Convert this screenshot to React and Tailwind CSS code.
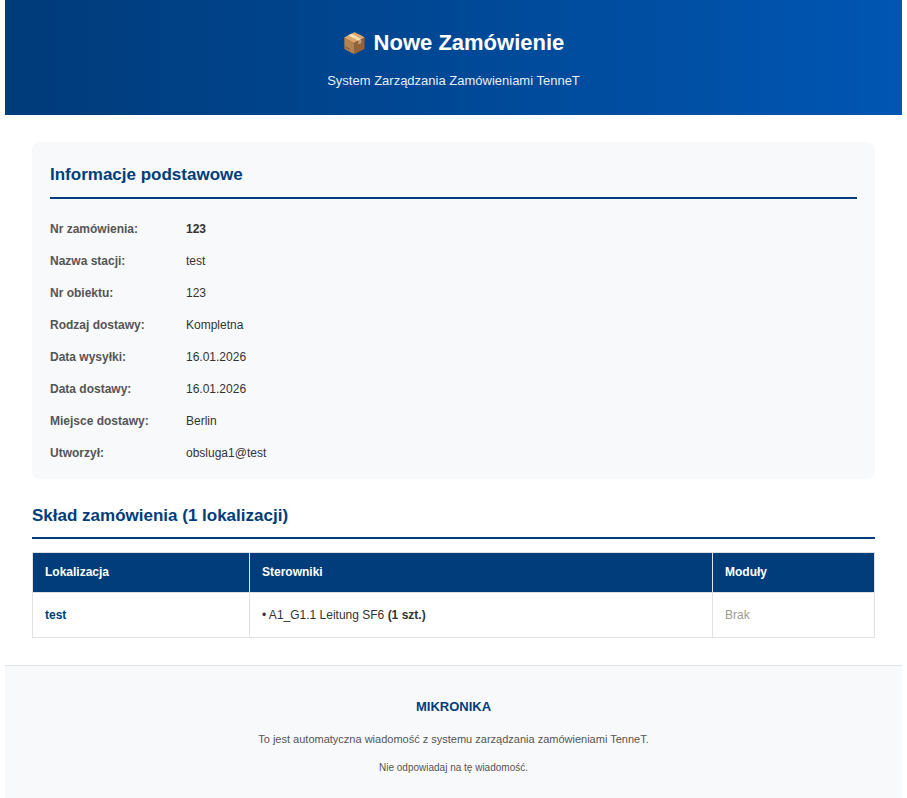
export default function App() {
  const rows = [
    ["Nr zamówienia:", "123", true],
    ["Nazwa stacji:", "test"],
    ["Nr obiektu:", "123"],
    ["Rodzaj dostawy:", "Kompletna"],
    ["Data wysyłki:", "16.01.2026"],
    ["Data dostawy:", "16.01.2026"],
    ["Miejsce dostawy:", "Berlin"],
    ["Utworzył:", "obsluga1@test"],
  ];
  return (
    <div className="bg-white min-h-[798px] px-[5px]" style={{ fontFamily: "'Liberation Sans', Arial, sans-serif" }}>
      <div className="h-[115px] bg-gradient-to-r from-[#003b7a] to-[#0056b3] flex flex-col items-center text-white">
        <div className="mt-[29px] text-[22px] font-bold leading-[28px] flex items-center gap-[6px]">
          <span className="text-[20px]" style={{ fontFamily: "'Noto Color Emoji', sans-serif" }}>📦</span>
          <span>Nowe Zamówienie</span>
        </div>
        <div className="mt-[14px] text-[13px] text-[#e6eefa]">System Zarządzania Zamówieniami TenneT</div>
      </div>
      <div className="px-[27px]">
        <div className="mt-[27px] bg-[#f8f9fa] rounded-lg px-[18px] pt-[20px] pb-[20px] h-[337px]">
          <div className="text-[17px] font-bold text-[#003d7a] pb-[9px] border-b-2 border-[#003d7a]">Informacje podstawowe</div>
          <div className="mt-[14px]">
            {rows.map(([l, v, b]) => (
              <div key={l} className="flex h-[32px] items-center text-[12px]">
                <div className="w-[136px] font-bold text-[#555]">{l}</div>
                <div className={b ? "font-bold text-[#333]" : "text-[#333]"}>{v}</div>
              </div>
            ))}
          </div>
        </div>
        <div className="mt-[24px] text-[17px] font-bold text-[#003d7a] pb-[8px] border-b-2 border-[#003d7a]">Skład zamówienia (1 lokalizacji)</div>
        <table className="mt-[13px] w-full border-collapse text-[12px]">
          <thead>
            <tr className="bg-[#003d7a] text-white h-[40px] text-left">
              <th className="w-[217px] px-[12px] font-bold border border-[#dee2e6]">Lokalizacja</th>
              <th className="px-[12px] font-bold border border-[#dee2e6]">Sterowniki</th>
              <th className="w-[162px] px-[12px] font-bold border border-[#dee2e6]">Moduły</th>
            </tr>
          </thead>
          <tbody>
            <tr className="h-[45px]">
              <td className="px-[12px] border border-[#dee2e6] font-bold text-[#003d7a]">test</td>
              <td className="px-[12px] border border-[#dee2e6] text-[#333]">• A1_G1.1 Leitung SF6 <b>(1 szt.)</b></td>
              <td className="px-[12px] border border-[#dee2e6] text-[#999]">Brak</td>
            </tr>
          </tbody>
        </table>
      </div>
      <div className="mt-[27px] bg-[#f8f9fa] border-t border-[#dee2e6] h-[135px] flex flex-col items-center">
        <div className="mt-[31px] text-[13px] font-bold text-[#003d7a]">MIKRONIKA</div>
        <div className="mt-[15px] text-[11px] text-[#555]">To jest automatyczna wiadomość z systemu zarządzania zamówieniami TenneT.</div>
        <div className="mt-[12px] text-[10px] text-[#555]">Nie odpowiadaj na tę wiadomość.</div>
      </div>
    </div>
  );
}
